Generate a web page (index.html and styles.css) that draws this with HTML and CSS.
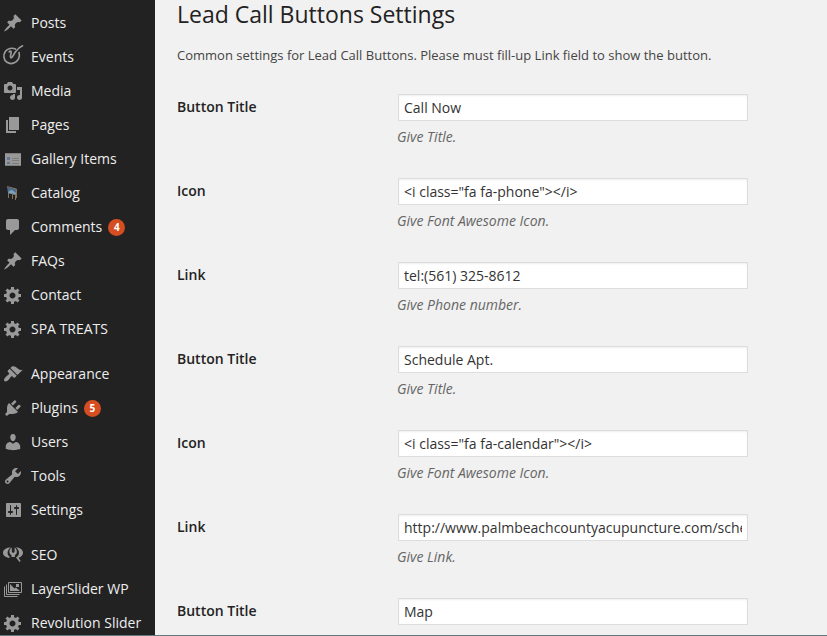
FILE: index.html
```html
<!DOCTYPE html>
<html lang="en">
<head>
<meta charset="utf-8">
<title>Lead Call Buttons Settings</title>
<link rel="stylesheet" href="styles.css">
</head>
<body>
<svg class="defs" aria-hidden="true">
  <symbol id="pin" viewBox="0 0 20 20"><path d="M10.44 3.02l1.82-1.82 6.36 6.35-1.83 1.82c-1.05-.68-2.48-.57-3.41.36l-.75.75c-.92.93-1.04 2.35-.35 3.41l-1.83 1.82-2.41-2.41-2.8 2.79c-.42.42-3.38 2.71-3.8 2.29s1.86-3.39 2.28-3.81l2.79-2.79L4.1 9.36l1.83-1.82c1.05.69 2.48.57 3.4-.36l.75-.75c.93-.92 1.05-2.35.36-3.41z"/></symbol>
  <symbol id="gear" viewBox="0 0 20 20"><path d="M18 12h-2.18c-.17.7-.44 1.35-.81 1.93l1.54 1.54-2.1 2.1-1.54-1.54c-.58.36-1.23.63-1.91.79V19H8v-2.18c-.68-.16-1.33-.43-1.91-.79l-1.54 1.54-2.12-2.12 1.54-1.54c-.36-.58-.63-1.23-.79-1.91H1V9.03h2.17c.16-.7.44-1.35.8-1.94L2.43 5.55l2.1-2.1 1.54 1.54c.58-.37 1.24-.64 1.93-.81V2h3v2.18c.68.16 1.33.43 1.91.79l1.54-1.54 2.12 2.12-1.54 1.54c.36.59.64 1.24.8 1.94H18V12zm-8.5 1.5c1.66 0 3-1.34 3-3s-1.34-3-3-3-3 1.34-3 3 1.34 3 3 3z"/></symbol>
</svg>
<div class="admin">
  <nav class="menu">
    <ul class="group">
      <li class="item"><svg class="icon"><use href="#pin"/></svg>Posts</li>
      <li class="item"><svg class="icon" viewBox="0 0 20 20"><g class="line"><path stroke-width="1.700" d="M12.500 2C9 .5 4.500 1.300 2.300 4.500 0 8 .5 13 4 15.300c4 2.600 9.500.8 11.500-3.500 1.100-2.300 1.100-4.300.6-6.300"/><path stroke-width="1.700" d="M6.200 4.800C7.500 3.500 8.500 4.300 8.100 6c-.3 1.500-1.300 4.500 0 4.800 1.500 0 2.400-3.300 4.400-6C14.300 2.500 16.500 0 19.500-1.200"/></g></svg>Events</li>
      <li class="item"><svg class="icon" viewBox="0 0 20 20"><path d="M13 11V4c0-.55-.45-1-1-1h-1.670L9 1H5L3.670 3H2c-.55 0-1 .45-1 1v7c0 .55.45 1 1 1h10c.55 0 1-.45 1-1zM7 4.500c1.380 0 2.500 1.120 2.500 2.500S8.380 9.500 7 9.500 4.500 8.380 4.500 7 5.620 4.500 7 4.500zM14 6h5v10.500c0 1.380-1.120 2.500-2.500 2.500S14 17.880 14 16.500s1.120-2.500 2.500-2.500c.17 0 .34.02.5.05V9h-3V6zm-4 8.050V13h2v3.500c0 1.380-1.120 2.500-2.500 2.500S7 17.880 7 16.500 8.120 14 9.500 14c.17 0 .34.02.5.05z"/></svg>Media</li>
      <li class="item"><svg class="icon" viewBox="0 0 20 20"><path d="M6 15V2h10v13H6zm-1 1h8v2H3V5h2v11z"/></svg>Pages</li>
      <li class="item"><svg class="icon" viewBox="0 0 20 20"><path d="M2 4h16v13H2z"/><path fill="#7d7d7d" d="M2 4h16v1H2zM2 16h16v1H2zM9 9h7v1H9zM9 11h7v1H9zM9 14h7v1H9z"/><path fill="#5f7896" d="M4 8h3v3H4zM4 13h3v2H4z"/></svg>Gallery Items</li>
      <li class="item"><svg class="icon" viewBox="0 0 20 20"><path fill="#4a6c8c" d="M4 4l9 2v6L5 10z"/><path fill="#80a0b8" d="M6 8l3-1 4 3v2L5 10z"/><path fill="none" stroke="#85735c" d="M4 3.500l9.500 2.500M5.500 10v5M9.500 10v6M12.500 11v6M13.500 6v9"/></svg>Catalog</li>
      <li class="item"><svg class="icon" viewBox="0 0 20 20"><path d="M5 2h9c1.100 0 2 .9 2 2v7c0 1.100-.9 2-2 2h-2l-5 5v-5H5c-1.100 0-2-.9-2-2V4c0-1.100.9-2 2-2z"/></svg>Comments<span class="badge">4</span></li>
      <li class="item"><svg class="icon"><use href="#pin"/></svg>FAQs</li>
      <li class="item"><svg class="icon"><use href="#gear"/></svg>Contact</li>
      <li class="item"><svg class="icon"><use href="#gear"/></svg>SPA TREATS</li>
    </ul>
    <ul class="group">
      <li class="item"><svg class="icon" viewBox="0 0 20 20"><path d="M14.480 11.060L7.410 3.990l1.500-1.500c.5-.56 2.300-.47 3.510.32 1.210.8 1.430 1.280 2.910 2.100 1.180.64 2.450 1.260 4.450.85zm-.71.71L6.700 4.700 4.930 6.470c-.39.39-.39 1.020 0 1.410l1.060 1.060c.39.39.39 1.030 0 1.420-.6.6-1.430 1.110-2.210 1.690-.35.26-.7.53-1.010.84C1.430 14.230.4 16.080 1.400 17.070c.99 1 2.840-.03 4.180-1.360.31-.31.58-.66.85-1.020.57-.78 1.080-1.610 1.690-2.210.39-.39 1.020-.39 1.410 0l1.060 1.060c.39.39 1.020.39 1.410 0z"/></svg>Appearance</li>
      <li class="item"><svg class="icon" viewBox="0 0 20 20"><path d="M13.110 4.360L9.870 7.600 8 5.730l3.240-3.240c.35-.34 1.050-.2 1.560.32.52.51.66 1.210.31 1.550zm-8 1.770l.91-1.120 9.010 9.010-1.190.84c-.71.71-2.630 1.160-3.820 1.160H6.140L4.900 17.260c-.59.59-1.540.59-2.120 0-.59-.58-.59-1.530 0-2.120l1.240-1.240v-3.880c0-1.130.4-3.190 1.090-3.890zm7.260 3.970l3.240-3.240c.34-.35 1.040-.21 1.550.31.52.51.66 1.210.31 1.550l-3.240 3.250z"/></svg>Plugins<span class="badge">5</span></li>
      <li class="item"><svg class="icon" viewBox="0 0 20 20"><path d="M10 9.250c-2.270 0-2.730-3.440-2.730-3.440C7 4.020 7.820 2 9.970 2c2.160 0 2.980 2.020 2.710 3.810 0 0-.41 3.440-2.680 3.440zm0 2.570L12.720 10c2.390 0 4.520 2.330 4.520 4.530v2.490s-3.650 1.130-7.240 1.130c-3.650 0-7.240-1.130-7.240-1.130v-2.490c0-2.250 1.940-4.480 4.470-4.480z"/></svg>Users</li>
      <li class="item"><svg class="icon" viewBox="0 0 20 20"><path d="M16.680 9.770c-1.340 1.340-3.300 1.670-4.950.99l-5.410 6.520c-.99.99-2.590.99-3.580 0s-.99-2.590 0-3.570l6.520-5.420c-.68-1.650-.35-3.610.99-4.950 1.280-1.280 3.120-1.620 4.720-1.060l-2.890 2.890 2.820 2.820 2.860-2.870c.53 1.580.18 3.390-1.080 4.650zM3.810 16.210c.4.39 1.040.39 1.430 0 .4-.4.4-1.040 0-1.430-.39-.4-1.030-.4-1.430 0-.39.39-.39 1.030 0 1.430z"/></svg>Tools</li>
      <li class="item"><svg class="icon" viewBox="0 0 20 20"><path d="M18 16V4c0-.55-.45-1-1-1H4c-.55 0-1 .45-1 1v12c0 .55.45 1 1 1h13c.55 0 1-.45 1-1zM8 11h1c.55 0 1 .45 1 1s-.45 1-1 1H8v1.500c0 .28-.22.5-.5.5s-.5-.22-.5-.5V13H6c-.55 0-1-.45-1-1s.45-1 1-1h1V5.500c0-.28.22-.5.5-.5s.5.22.5.5V11zm5-2h-1c-.55 0-1-.45-1-1s.45-1 1-1h1V5.500c0-.28.22-.5.5-.5s.5.22.5.5V7h1c.55 0 1 .45 1 1s-.45 1-1 1h-1v5.500c0 .28-.22.5-.5.5s-.5-.22-.5-.5V9z"/></svg>Settings</li>
    </ul>
    <ul class="group">
      <li class="item"><svg class="icon" viewBox="0 0 20 20"><path d="M8 2.200C3.500 2.400 0 4.500 0 7.800c0 2.900 2.700 4.700 6.500 5.200v-1.600C5 10.500 4.600 9.300 4.600 7.700 4.600 5.500 6 3.500 8 2.200zM8.800 2.500V7l1.400 1 1.400-1V2.500c1.600 1 2.300 2.600 2.300 4.300 0 1.500-.8 2.700-2 3.400V12H8.500v-1.800C7.200 9.500 6.400 8.300 6.400 6.800c0-1.700.8-3.300 2.400-4.300zM12.500 2.200c4.500.2 7.500 2.400 7.500 5.600 0 2.400-1.800 4.200-4.500 5l2.200 3.200-1.200 1-3.500-4.500c2-1.200 3-2.800 3-4.800 0-2.300-1.300-4.200-3.500-5.500z"/></svg>SEO</li>
      <li class="item"><svg class="icon" viewBox="0 0 20 20"><path fill="none" stroke="#999" d="M5.500 3.500h13v10h-13zM3.500 5.500v10h13M1.500 7.500v10h13"/><path d="M7 12V5l4.500 4.500 1.500-1 4 3.500zM13 5h3v3h-3z"/></svg>LayerSlider WP</li>
      <li class="item"><svg class="icon"><use href="#gear"/></svg>Revolution Slider</li>
    </ul>
  </nav>
  <main class="content">
    <h1 class="title">Lead Call Buttons Settings</h1>
    <p class="intro">Common settings for Lead Call Buttons. Please must fill-up Link field to show the button.</p>
    <form class="form">
      <div class="row"><label class="label" for="f1">Button Title</label><div class="field"><input id="f1" class="input" type="text" value="Call Now"><p class="hint">Give Title.</p></div></div>
      <div class="row"><label class="label" for="f2">Icon</label><div class="field"><input id="f2" class="input" type="text" value="&lt;i class=&quot;fa fa-phone&quot;&gt;&lt;/i&gt;"><p class="hint">Give Font Awesome Icon.</p></div></div>
      <div class="row"><label class="label" for="f3">Link</label><div class="field"><input id="f3" class="input" type="text" value="tel:(561) 325-8612"><p class="hint">Give Phone number.</p></div></div>
      <div class="row"><label class="label" for="f4">Button Title</label><div class="field"><input id="f4" class="input" type="text" value="Schedule Apt."><p class="hint">Give Title.</p></div></div>
      <div class="row"><label class="label" for="f5">Icon</label><div class="field"><input id="f5" class="input" type="text" value="&lt;i class=&quot;fa fa-calendar&quot;&gt;&lt;/i&gt;"><p class="hint">Give Font Awesome Icon.</p></div></div>
      <div class="row"><label class="label" for="f6">Link</label><div class="field"><input id="f6" class="input" type="text" value="http://www.palmbeachcountyacupuncture.com/schedule"><p class="hint">Give Link.</p></div></div>
      <div class="row"><label class="label" for="f7">Button Title</label><div class="field"><input id="f7" class="input" type="text" value="Map"></div></div>
    </form>
  </main>
</div>
</body>
</html>
```
FILE: styles.css
```css
* { box-sizing: border-box; }
body {
  margin: 0;
  height: 636px;
  overflow: hidden;
  background: #f1f1f1;
  border-bottom: 1px solid #64797b;
  font-family: "Open Sans", sans-serif;
  font-size: 14px;
  color: #444;
}
.defs { display: none; }
.admin { display: flex; height: 635px; }
.menu { width: 155px; flex: none; padding-top: 6px; background: #222; color: #eee; }
.group { margin: 0 0 11px; padding: 0; list-style: none; }
.group:last-child { margin-bottom: 0; }
.item { display: flex; align-items: center; height: 34px; padding-left: 3px; white-space: nowrap; line-height: 18px; }
.icon { width: 20px; height: 20px; flex: none; margin-right: 8px; fill: #999; overflow: visible; }
.line { fill: none; stroke: #999; stroke-linecap: round; }
.badge {
  width: 17px;
  height: 17px;
  margin: 1px 0 0 6px;
  border-radius: 50%;
  background: #d54e21;
  color: #fff;
  font-size: 10px;
  font-weight: 700;
  line-height: 17px;
  text-align: center;
}
.content { flex: 1; min-width: 0; height: 635px; padding-left: 22px; }
.title { margin: 0; height: 29px; font-size: 23px; font-weight: 400; line-height: 29px; color: #222; }
.intro { margin: 16px 0 29px; font-size: 13px; line-height: 20px; }
.row { display: flex; height: 84px; }
.row:last-child { height: 41px; }
.label { width: 220px; flex: none; padding-top: 3px; font-weight: 600; line-height: 20px; color: #222; }
.field { width: 352px; }
.input {
  display: block;
  width: 350px;
  height: 27px;
  margin: 0 1px;
  padding: 3px 5px;
  border: 1px solid #ddd;
  border-radius: 0;
  background: #fff;
  box-shadow: inset 0 1px 2px rgba(0, 0, 0, .07);
  color: #333;
  font: 14px "Open Sans", sans-serif;
}
.hint { margin: 6px 0 0; font-style: italic; line-height: 20px; color: #666; }
```
